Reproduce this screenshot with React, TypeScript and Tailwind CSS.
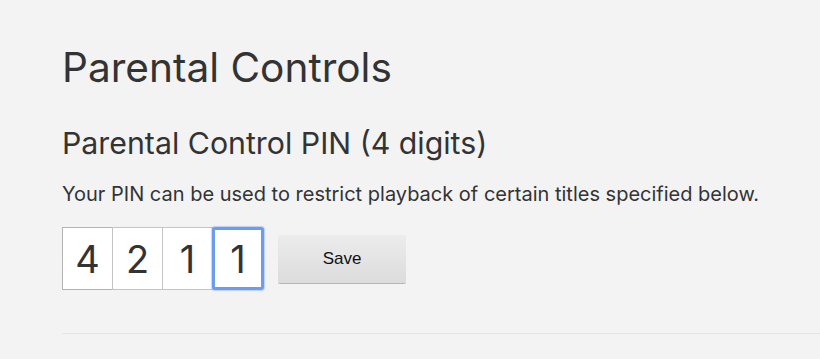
import React, { useState } from 'react';

const FONT = { fontFamily: 'Inter, "Noto Sans", Arial, sans-serif' };

export default function App() {
  const [pin, setPin] = useState(['4', '2', '1', '1']);

  return (
    <div className="min-h-screen w-full bg-[#f3f3f3] text-[#333]" style={FONT}>
      <div className="pl-[62px] pt-[44px]">
        <h1 className="text-[40.6px] leading-[48px] font-normal text-[#333]">Parental Controls</h1>
        <h2 className="mt-[33px] text-[30.3px] leading-[36px] font-normal text-[#333]">Parental Control PIN (4 digits)</h2>
        <p className="mt-[21px] text-[20px] leading-[24px] text-[#333]">
          Your PIN can be used to restrict playback of certain titles specified below.
        </p>
        <div className="mt-[21px] flex items-start">
          <div className="flex">
            {pin.map((d, i) => (
              <input
                key={i}
                value={d}
                maxLength={1}
                onChange={e => {
                  const next = [...pin];
                  next[i] = e.target.value;
                  setPin(next);
                }}
                className={
                  i === 3
                    ? 'h-[63px] w-[52px] -ml-px rounded-[3px] border-[3px] border-[#6c9bf2] bg-white text-center text-[38px] text-[#333] outline-none shadow-[0_0_1px_1px_rgba(108,155,242,0.4)]'
                    : i === 0
                    ? 'h-[63px] w-[51px] border border-[#b3b3b3] bg-white text-center text-[38px] text-[#333] outline-none'
                    : 'h-[63px] w-[51px] -ml-px border border-[#c4c4c4] bg-white text-center text-[38px] text-[#333] outline-none'
                }
                style={FONT}
              />
            ))}
          </div>
          <button
            className="ml-[14px] mt-[8px] h-[48px] w-[128px] rounded-[2px] bg-gradient-to-b from-[#ececec] to-[#dcdcdc] text-[17px] font-normal text-[#111] shadow-[0_1px_0_rgba(0,0,0,0.25)]"
            style={{ fontFamily: '"Liberation Sans", Arial, sans-serif' }}
          >
            Save
          </button>
        </div>
        <div className="mt-[43px] h-px bg-[#e6e6e6]" />
      </div>
    </div>
  );
}
